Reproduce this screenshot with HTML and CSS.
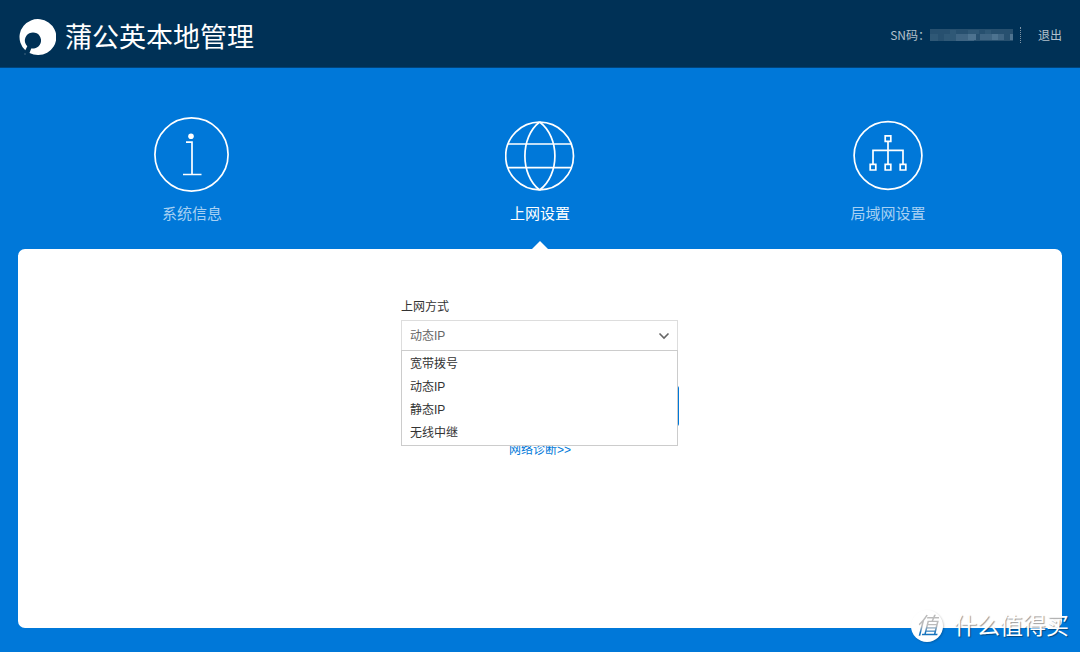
FILE: index.html
```html
<!DOCTYPE html>
<html lang="zh-CN">
<head>
<meta charset="utf-8">
<meta name="viewport" content="width=device-width, initial-scale=1">
<title>蒲公英本地管理</title>
<link rel="stylesheet" href="styles.css">
</head>
<body>
<header class="header">
  <div class="brand">
    <svg class="brand-logo" viewBox="0 0 38 38" aria-hidden="true">
      <path fill="#fff" d="M7.3 32.2A18.4 18 0 1 1 11.5 35.1L13.2 30.4A8.1 8.1 0 1 0 9.3 28.3Z"/>
      <circle cx="7" cy="36" r="1" fill="#2a5372"/>
    </svg>
    <h1 class="brand-name">蒲公英本地管理</h1>
  </div>
  <div class="account">
    <span class="sn">SN码：</span>
    <svg class="sn-mask" viewBox="0 0 83 12" aria-hidden="true" shape-rendering="crispEdges">
      <path fill="#27506f" d="M0 0h83v12H0z"/>
      <path fill="#2f5876" d="M0 5h8v7H0zM20 1h6v4h-6zM38 1h11v4H38zM55 1h6v4h-6zM14 5h12v7H14z"/>
      <path fill="#3f6583" d="M26 5h18v7H26zM50 5h24v6H50z"/>
      <path fill="#4d7390" d="M38 5h8v6h-8zM62 5h6v6h-6zM80 5h3v6h-3z"/>
    </svg>
    <a class="logout" href="#logout">退出</a>
  </div>
</header>

<nav class="tabs">
  <a class="tab" href="#system">
    <span class="tab-icon">
      <svg width="76" height="76" viewBox="0 0 76 76" fill="none" stroke="#fff" stroke-width="1.7" aria-hidden="true">
        <circle cx="37.5" cy="37.5" r="36.6"/>
        <circle cx="37" cy="19.3" r="2.8" fill="#fff" stroke="none"/>
        <path d="M32 25.2h6v32M29 57.5h18.5"/>
      </svg>
    </span>
    <span class="tab-label">系统信息</span>
  </a>
  <a class="tab tab-active" href="#wan" aria-current="page">
    <span class="tab-icon">
      <svg width="70" height="72" viewBox="0 -2 70 72" fill="none" stroke="#fff" stroke-width="1.7" aria-hidden="true">
        <circle cx="34.6" cy="35" r="33.9"/>
        <path d="M34.6 1C15 16 15 54 34.6 69M34.6 1C55 16 55 54 34.6 69M3 23h64M3 46.7h64"/>
      </svg>
    </span>
    <span class="tab-label">上网设置</span>
  </a>
  <a class="tab" href="#lan">
    <span class="tab-icon">
      <svg width="70" height="72" viewBox="0 -2 70 72" fill="none" stroke="#fff" stroke-width="1.7" aria-hidden="true">
        <circle cx="35" cy="34.5" r="33.9"/>
        <path d="M32.2 14.8h5.6v5.6h-5.6zM17.2 43.4h5.6v5.6h-5.6zM32.2 43.4h5.6v5.6h-5.6zM47.2 43.4h5.6v5.6h-5.6zM35 20.4v23M20 43.4V29.3h30v14.1"/>
      </svg>
    </span>
    <span class="tab-label">局域网设置</span>
  </a>
</nav>

<main class="panel">
  <form class="form">
    <label class="field-label" for="mode">上网方式</label>
    <div class="dropdown">
      <select class="select" id="mode">
        <option>动态IP</option>
      </select>
      <svg class="chevron" viewBox="0 0 12 8" fill="none" stroke="#666" stroke-width="1.6" aria-hidden="true"><path d="M1.5 1.5L6 6l4.5-4.5"/></svg>
      <ul class="options" role="listbox" aria-label="上网方式">
        <li class="option" role="option">宽带拨号</li>
        <li class="option" role="option" aria-selected="true">动态IP</li>
        <li class="option" role="option">静态IP</li>
        <li class="option" role="option">无线中继</li>
      </ul>
    </div>
    <button class="save" type="button" aria-label="保存"></button>
    <a class="diagnose" href="#diagnose">网络诊断&gt;&gt;</a>
  </form>
</main>

<div class="watermark">
  <span class="watermark-badge"><span class="watermark-glyph">值</span></span>
  <span class="watermark-name">什么值得买</span>
</div>
</body>
</html>
```
FILE: styles.css
```css
* {
  box-sizing: border-box;
}

body {
  position: relative;
  display: flex;
  flex-direction: column;
  min-height: 100vh;
  margin: 0;
  padding-bottom: 24px;
  background: #0078d9;
  color: #333;
  font: 12px/20px "Liberation Sans", "Noto Sans CJK SC", sans-serif;
}

a {
  text-decoration: none;
}

/* Header */

.header {
  display: flex;
  align-items: flex-start;
  justify-content: space-between;
  height: 68px;
  padding: 17px 18px 0;
  border-bottom: 1px solid #00447c;
  background: #003156;
}

.brand {
  display: flex;
  align-items: center;
  gap: 9px;
}

.brand-logo {
  width: 38px;
  height: 38px;
}

.brand-name {
  margin: 0;
  padding-top: 2px;
  color: #fff;
  font-size: 27px;
  font-weight: 400;
  line-height: 38px;
}

.account {
  display: flex;
  align-items: center;
  padding-top: 8px;
  color: #b3c1cc;
  font-family: "Noto Sans CJK SC", sans-serif;
}

.sn-mask {
  width: 83px;
  height: 12px;
  margin-right: 7px;
}

.logout {
  padding-left: 17px;
  border-left: 1px dotted #8095a6;
  color: #b3c1cc;
  line-height: 16px;
}

/* Section tabs */

.tabs {
  display: grid;
  grid-template-columns: repeat(3, 1fr);
  margin: 0 18px;
  padding: 49px 0 23px;
}

.tab {
  position: relative;
  display: flex;
  flex-direction: column;
  align-items: center;
  gap: 9px;
  color: #a6d0f3;
  font-size: 15px;
  line-height: 24px;
}

.tab-icon {
  display: flex;
  align-items: center;
  height: 76px;
}

.tab-active {
  color: #fff;
}

.tab-active::after {
  content: "";
  position: absolute;
  bottom: -24px;
  border: 9px solid transparent;
  border-top: 0;
  border-bottom-color: #fff;
}

/* Settings panel */

.panel {
  flex: 1;
  margin: 0 18px;
  padding: 48px 20px 20px;
  border-radius: 7px;
  background: #fff;
}

.form {
  display: flex;
  flex-direction: column;
  width: 100%;
  max-width: 278px;
  margin: 0 auto;
}

.dropdown {
  position: relative;
  margin: 3px 1px 0 0;
}

.select {
  display: block;
  width: 100%;
  height: 31px;
  padding: 1px 28px 0 8px;
  border: 1px solid #ddd;
  border-radius: 0;
  background: #fff;
  color: #666;
  font: inherit;
  appearance: none;
}

.chevron {
  position: absolute;
  top: 12px;
  right: 8px;
  width: 12px;
  height: 8px;
}

.options {
  position: absolute;
  z-index: 1;
  top: 30px;
  left: 0;
  right: 0;
  margin: 0;
  padding: 2px 0 0;
  border: 1px solid #ccc;
  background: #fff;
  list-style: none;
}

.option {
  padding-left: 8px;
  line-height: 23px;
}

.option + .option {
  padding-top: 0;
}

.save {
  height: 40px;
  margin-top: 35px;
  border: 0;
  border-radius: 2px;
  background: #0078d9;
}

.diagnose {
  align-self: center;
  margin-top: 14px;
  color: #0078d9;
}

/* Corner mark */

.watermark {
  position: absolute;
  right: 11px;
  bottom: 10px;
  display: flex;
  align-items: center;
  gap: 11px;
}

.watermark-badge {
  display: flex;
  align-items: center;
  justify-content: center;
  width: 32px;
  height: 32px;
  border-radius: 50%;
  background: #fff;
  box-shadow: 1px 1px 2px #0003;
}

.watermark-glyph {
  background: linear-gradient(#bbb 50%, #1673bd 70%);
  background-clip: text;
  color: transparent;
  font-size: 23px;
  font-style: italic;
  line-height: 32px;
}

.watermark-name {
  color: #fff;
  font-size: 23px;
  font-weight: 400;
  line-height: 32px;
  text-shadow: 1px 1px 1px #0006;
}
```
